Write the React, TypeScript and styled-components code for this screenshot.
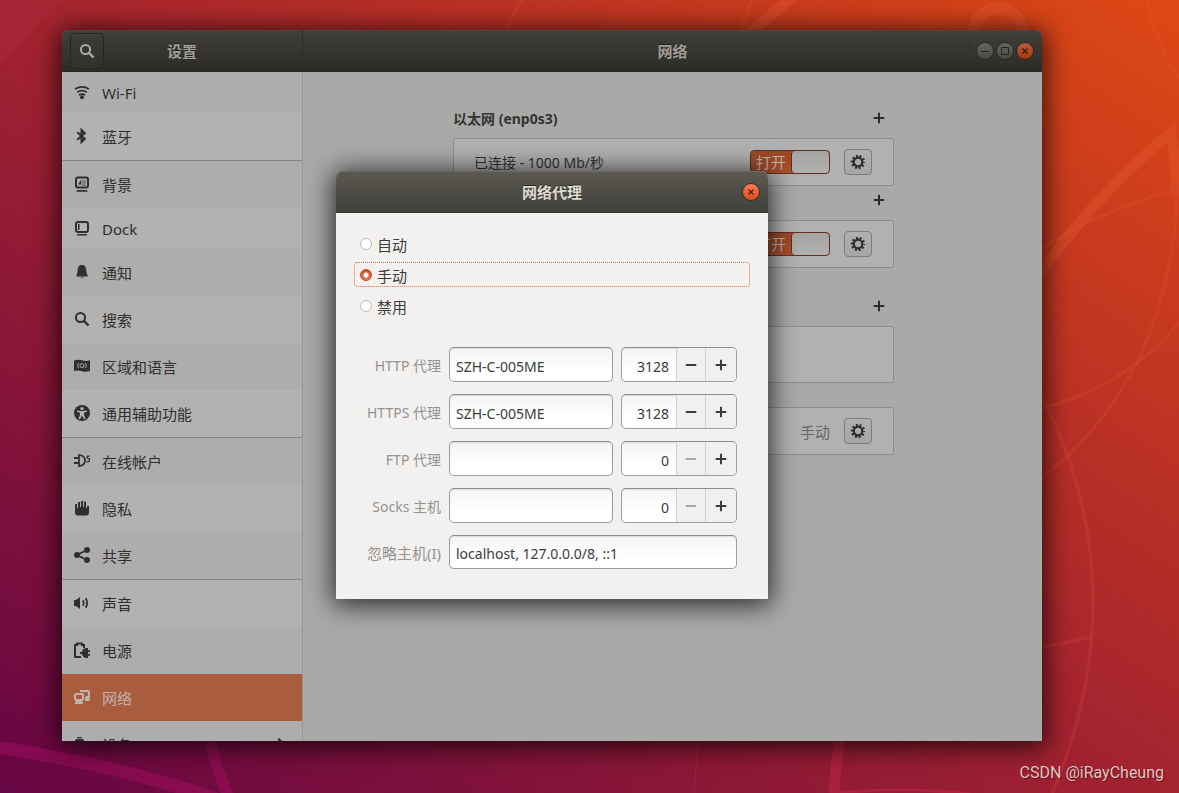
import React, { useId, useState } from "react";
import styled, { createGlobalStyle, css } from "styled-components";

const uiFont = `"Noto Sans", "Noto Sans CJK SC", sans-serif`;

const GlobalStyle = createGlobalStyle`
  *, *::before, *::after { box-sizing: border-box; }
  body { margin: 0; font-family: ${uiFont}; font-size: 14px; color: #333331; }
  button, input { font: inherit; color: inherit; margin: 0; }
  ul, h1, h2, p { margin: 0; padding: 0; }
  ul { list-style: none; }
`;

/* ---------- desktop ---------- */

const Desktop = styled.div`
  position: relative;
  display: flex;
  flex-direction: column;
  height: 100vh;
  overflow: hidden;
  background: linear-gradient(to top right, #650543 0%, #a3232f 50%, #dd4814 100%);
`;

const Wallpaper = styled.svg`
  position: absolute;
  inset: 0;
  width: 100%;
  height: 100%;
  fill: none;
`;

const Workspace = styled.div`
  position: relative;
  flex: 1;
  min-height: 0;
  display: flex;
  padding: 30px 137px 0 62px;
`;

const Credit = styled.footer`
  position: relative;
  height: 52px;
  padding: 22px 15px 0 0;
  text-align: right;
  font-family: Roboto, sans-serif;
  font-size: 16px;
  line-height: 20px;
  color: #dfc3c4;
  text-shadow: 1px 1px 1px rgba(60, 10, 10, 0.6);
`;

/* ---------- settings window ---------- */

const Window = styled.div`
  position: relative;
  flex: 1;
  min-width: 0;
  display: flex;
  flex-direction: column;
  border-radius: 7px 7px 0 0;
  background: #a9a9a7;
  box-shadow: 0 3px 26px 3px rgba(0, 0, 0, 0.75);
`;

const TitleBar = styled.header`
  display: flex;
  height: 42px;
  flex: none;
  border-radius: 7px 7px 0 0;
  background: linear-gradient(#403f39, #2c2b28);
  box-shadow: inset 0 1px #4a4943, inset 0 -1px #272623;
`;

const TitleLeft = styled.div`
  display: flex;
  align-items: center;
  width: 241px;
  padding-left: 8px;
  border-right: 1px solid #2d2c28;
`;

const Title = styled.h1`
  flex: 1;
  text-align: center;
  font-size: 15px;
  line-height: 22px;
  font-weight: 700;
  color: #a09e98;
  text-shadow: 0 -1px rgba(0, 0, 0, 0.5);
`;

const SidebarTitle = styled(Title)`
  padding-right: 42px;
`;

const TitleRight = styled.div`
  flex: 1;
  display: flex;
  align-items: center;
  padding-left: 73px;
`;

const SearchButton = styled.button`
  display: grid;
  place-items: center;
  width: 34px;
  height: 36px;
  padding: 0;
  border: 1px solid #262522;
  border-radius: 5px;
  background: linear-gradient(#3c3b36, #31302c);
  box-shadow: inset 0 1px #45443e;
  color: #aaa9a4;
`;

const WindowControls = styled.div`
  display: flex;
  gap: 2px;
  padding: 0 8px 0 6px;
  border-left: 1px solid #302f2b;
`;

const RoundButton = styled.button<{ $tone: "grey" | "dimOrange" | "orange" }>`
  display: grid;
  place-items: center;
  width: 18px;
  height: 18px;
  padding: 0;
  border-radius: 50%;
  border: 1px solid #292824;
  ${({ $tone }) =>
    $tone === "grey"
      ? css`background: linear-gradient(#666560, #494843); color: #272622;`
      : $tone === "dimOrange"
      ? css`background: linear-gradient(#bb5a3f, #a03910); color: #36180c;`
      : css`background: linear-gradient(#f67d58, #df4816); color: #4b2011; border-color: #33312c;`}
`;

const WindowBody = styled.div`
  flex: 1;
  min-height: 0;
  display: flex;
`;

const Sidebar = styled.nav`
  width: 241px;
  flex: none;
  overflow: hidden;
  border-right: 1px solid #989896;
  background: #adadad;
`;

const SidebarItem = styled.li<{ $divided?: boolean }>`
  border-bottom: ${({ $divided }) => ($divided ? "1px solid #8a8783" : "0")};
`;

const SidebarLink = styled.a<{ $selected?: boolean; $short?: boolean; $light?: boolean }>`
  display: flex;
  align-items: center;
  gap: 12px;
  height: ${({ $short }) => ($short ? 41 : 47)}px;
  padding: 0 17px 2px 12px;
  font-size: 15px;
  text-decoration: none;
  color: ${({ $selected }) => ($selected ? "#c1b2ab" : "#2f2f2e")};
  background: ${({ $selected, $light }) => ($selected ? "#a95c3e" : $light ? "#b2b2b2" : "#adadad")};

  svg { flex: none; }
  span { flex: 1; padding-top: 2px; }
`;

const Panel = styled.main`
  flex: 1;
  padding: 32px 24px 32px 26px;
`;

const Column = styled.div`
  max-width: 441px;
  margin: 0 auto;
`;

const Section = styled.section<{ $spaced?: boolean }>`
  margin-top: ${({ $spaced }) => ($spaced ? 24 : 0)}px;
`;

const SectionHead = styled.div`
  display: flex;
  align-items: center;
  justify-content: space-between;
  height: 28px;
  margin-bottom: 6px;
`;

const SectionTitle = styled.h2`
  padding-top: 2px;
  font-size: 14px;
  line-height: 20px;
  font-weight: 700;
`;

const AddButton = styled.button`
  display: grid;
  place-items: center;
  margin-left: auto;
  width: 30px;
  height: 28px;
  padding: 0;
  border: 0;
  background: none;
  color: #2c2c2b;
`;

const Card = styled.div<{ $tall?: boolean }>`
  display: flex;
  align-items: center;
  gap: 14px;
  height: ${({ $tall }) => ($tall ? 57 : 48)}px;
  padding: 0 21px 0 20px;
  border: 1px solid #8d8d8b;
  border-radius: 2px;
  background: #b1b1b1;
`;

const CardText = styled.p`
  flex: 1;
`;

const CardValue = styled.p`
  margin-left: auto;
  font-size: 15px;
  color: #676765;
`;

const Switch = styled.label`
  position: relative;
  display: flex;
  justify-content: space-between;
  align-items: center;
  width: 80px;
  height: 24px;
  margin-left: auto;
  padding-left: 5px;
  border: 1px solid #62301e;
  border-radius: 4px;
  background: linear-gradient(#9c4827, #a9502d);
  color: #c6b5ad;
  font-size: 15px;
  line-height: 22px;

  input {
    position: absolute;
    opacity: 0;
    inset: 0;
  }
`;

const SwitchKnob = styled.span`
  width: 38px;
  height: 22px;
  border-left: 1px solid #62301e;
  border-radius: 4px;
  background: linear-gradient(#a4a4a2, #b1b1af);
`;

const GearButton = styled.button`
  display: grid;
  place-items: center;
  width: 28px;
  height: 26px;
  padding: 0;
  border: 1px solid #7d7d7b;
  border-radius: 4px;
  background: linear-gradient(#b0b0af, #a6a6a4);
  color: #2c2c2b;
`;

/* ---------- proxy dialog ---------- */

const DialogLayer = styled.div`
  position: absolute;
  inset: 0;
  display: grid;
  place-items: center;
  padding-bottom: 1px;
`;

const Dialog = styled.form`
  width: 432px;
  border-radius: 7px 7px 0 0;
  background: #f2f1f0;
  color: #3c3c3b;
  box-shadow: 0 3px 26px 3px rgba(0, 0, 0, 0.75);
`;

const DialogBar = styled.header`
  display: flex;
  align-items: center;
  height: 42px;
  padding: 0 8px 0 26px;
  border-radius: 7px 7px 0 0;
  background: linear-gradient(#5c5a51, #403f3a);
  box-shadow: inset 0 1px #6a685e, inset 0 -1px #363530;
`;

const DialogTitle = styled(Title)`
  color: #dfdbd2;
`;

const DialogBody = styled.div`
  padding: 18px 18px 30px;
`;

const ModeList = styled.div`
  display: grid;
  gap: 6px;
  margin-bottom: 29px;
`;

const Mode = styled.label<{ $focused?: boolean }>`
  display: flex;
  align-items: center;
  gap: 5px;
  height: 25px;
  padding: 0 4px 0 5px;
  border: 1px dotted ${({ $focused }) => ($focused ? "#ee6b3c" : "transparent")};
  border-radius: 3px;
  font-size: 15px;
  line-height: 22px;

  span { padding-top: 2px; }
`;

const Radio = styled.input`
  appearance: none;
  width: 12px;
  height: 12px;
  border: 1px solid #bdbbb8;
  border-radius: 50%;
  background: #ffffff;

  &:checked {
    border-color: #bb4a22;
    background: radial-gradient(circle, #ffffff 0 2px, transparent 3px), linear-gradient(#cb4f22, #ea7f58);
  }
`;

const Fields = styled.div`
  display: grid;
  grid-template-columns: 87px 1fr 116px;
  gap: 12px 8px;
  padding-right: 13px;
`;

const FieldLabel = styled.label<{ $large?: boolean }>`
  align-self: center;
  padding-top: 2px;
  text-align: right;
  white-space: nowrap;
  font-size: ${({ $large }) => ($large ? 15 : 14)}px;
  line-height: 20px;
  color: #94928f;
`;

const entry = css`
  height: 35px;
  border: 1px solid #a09e9b;
  border-top-color: #8e8c89;
  border-radius: 5px;
  background: linear-gradient(#f4f4f4, #ffffff 70%);
  box-shadow: inset 0 1px 1px #dddddc;
`;

const Entry = styled.input<{ $wide?: boolean }>`
  ${entry}
  width: 100%;
  min-width: 0;
  padding: 3px 6px 0;
  outline: 0;
  ${({ $wide }) => $wide && css`grid-column: span 2; height: 34px;`}
`;

const Spin = styled.div`
  ${entry}
  display: flex;
  overflow: hidden;
`;

const SpinValue = styled.input`
  flex: 1;
  min-width: 0;
  padding: 3px 7px 0 0;
  border: 0;
  background: none;
  text-align: right;
  outline: 0;
`;

const SpinButton = styled.button<{ $last?: boolean }>`
  display: grid;
  place-items: center;
  width: ${({ $last }) => ($last ? 31 : 29)}px;
  padding: 0 1px 0 0;
  border: 0;
  border-left: 1px solid #d3d2d0;
  background: #f1f0ef;
  color: #3c3c3b;

  &:disabled { color: #a9a7a4; }
`;

/* ---------- icons ---------- */

type IconProps = { size?: number; children: React.ReactNode };

const Icon = ({ size = 16, children }: IconProps) => (
  <svg width={size} height={size} viewBox="0 0 16 16" fill="currentColor" aria-hidden="true">
    {children}
  </svg>
);

const line = (width: number) => ({ fill: "none", stroke: "currentColor", strokeWidth: width });

const WifiIcon = () => (
  <Icon>
    <path d="M1 5Q8 .6 15 5M3.200 8.200Q8 5.200 12.800 8.200M5 11Q8 9.200 11 11" {...line(1.700)} />
    <circle cx="8" cy="13.200" r="2" />
  </Icon>
);
const BluetoothIcon = () => (
  <Icon>
    <path d="M3.200 4.300l7.600 6.400-3.300 3.300V2l3.300 3.300-7.600 6.400" {...line(2.100)} />
  </Icon>
);
const BackgroundIcon = () => (
  <Icon>
    <rect x="2" y="1.500" width="12" height="10" rx="2" {...line(2)} />
    <path d="M3.500 14h9l1.500 1.800H2z" />
    <path d="M4 8.500l3-4.500v4.500z" />
    <path d="M7.500 4H12v6H7.500z" opacity=".35" />
  </Icon>
);
const DockIcon = () => (
  <Icon>
    <rect x="2" y="2" width="12" height="10" rx="2" {...line(2)} />
    <path d="M3.500 14h9l1 1.500H2.500zM4 4h1.500v6H4z" />
  </Icon>
);
const BellIcon = () => (
  <Icon>
    <path d="M8 1c3 0 4 2 4.300 5 .3 3.500.7 4.500 1.700 6.500H2c1-2 1.400-3 1.700-6.500C4 3 5 1 8 1zM6.500 13h3L8 14.200z" />
  </Icon>
);
const SearchIcon = () => (
  <Icon>
    <circle cx="6.500" cy="6.500" r="4.600" {...line(2)} />
    <path d="M10 10l4.500 4.500" {...line(2.400)} />
  </Icon>
);
const RegionIcon = () => (
  <Icon>
    <path d="M0 2.500Q4 1 8 2.300T16 2.200V13q-4 1.300-8 .2T0 13z" />
    <g stroke="#adadad" fill="none" strokeWidth="1">
      <circle cx="8" cy="7.600" r="2" />
      <path d="M4.500 5q-1.800 2.600 0 5.200M11.500 5q1.800 2.600 0 5.200" />
    </g>
  </Icon>
);
const AccessIcon = () => (
  <Icon>
    <circle cx="8" cy="8" r="8" />
    <g fill="#b2b2b2">
      <circle cx="8" cy="3.600" r="1.700" />
      <path d="M3 5.600l4 .4h2l4-.4v1.200l-3 .9v2l1.500 4.100-1.400.5L8 10.600 5.900 14.300l-1.400-.5L6 9.700v-2l-3-.9z" />
    </g>
  </Icon>
);
const AccountsIcon = () => (
  <Icon>
    <path d="M0 5h5M0 10h5" {...line(1.900)} />
    <path d="M5 2q6 .5 6 5.600T5 13.200z" {...line(1.700)} />
    <path d="M15.600 3.300q-2.600-.8-2.600.8t2 1.500-.6 3.100q-1 .3-2-.2" {...line(1.200)} />
  </Icon>
);
const HandIcon = () => (
  <Icon>
    <path d="M1 4h2v4h1V2h2v5h1V1h2v6h1V1.500h2V8h1V6h2v6.500q0 3-3 3H4q-3 0-3-3z" />
  </Icon>
);
const ShareIcon = () => (
  <Icon>
    <circle cx="3" cy="8" r="3" />
    <circle cx="13" cy="3" r="3" />
    <circle cx="13" cy="13" r="3" />
    <path d="M13 3L3 8l10 5" {...line(1.800)} />
  </Icon>
);
const SoundIcon = () => (
  <Icon>
    <path d="M0 5h2l4-3v12l-4-3H0z" />
    <path d="M9 5.300q1.500 2.700 0 5.400M11.700 3.200q2.800 4.800 0 9.600" {...line(1.800)} />
  </Icon>
);
const PowerIcon = () => (
  <Icon>
    <path d="M7 15H1V3h2V1.500h5V3h2v3" {...line(2)} />
    <path d="M6 10h2Q8.500 6.500 12 6h2v2.200h2v1.700h-2v2.200h2v1.700h-2V16h-2q-3.500-.5-4-4H6z" />
  </Icon>
);
const NetworkIcon = () => (
  <Icon>
    <rect x="1" y="5" width="8" height="6" rx="1" {...line(2)} />
    <path d="M2 12h6l1.500 3H.5z" />
    <path d="M6 2h8q1 0 1 1v5h-3" {...line(2)} />
    <path d="M11 8h4l1 4h-5z" />
  </Icon>
);
const DevicesIcon = () => (
  <Icon>
    <path d="M3 1h5v1.300H3zM2.500 3h6Q10 3 10 5v10H1V5q0-2 1.500-2z" />
  </Icon>
);
const ChevronIcon = () => (
  <Icon size={12}>
    <path d="M7 1l7 7-7 7" {...line(3)} />
  </Icon>
);
const GearIcon = () => (
  <Icon>
    <circle cx="8" cy="8" r="4.300" {...line(2.200)} />
    <circle cx="8" cy="8" r="6" {...line(2.400)} strokeDasharray="1.900 1.870" strokeDashoffset=".95" />
  </Icon>
);
const PlusIcon = () => (
  <Icon size={12}>
    <path d="M8 1v14M1 8h14" {...line(2.700)} />
  </Icon>
);
const MinusIcon = () => (
  <Icon size={12}>
    <path d="M1 8h14" {...line(2.700)} />
  </Icon>
);
const CloseGlyph = () => (
  <Icon size={8}>
    <path d="M3 3l10 10M13 3L3 13" {...line(2.400)} />
  </Icon>
);
const MinimizeGlyph = () => (
  <Icon size={8}>
    <path d="M0 9h16" {...line(2)} />
  </Icon>
);
const MaximizeGlyph = () => (
  <Icon size={8}>
    <path d="M1 1h14v14H1z" {...line(2)} />
  </Icon>
);

/* ---------- content ---------- */

type NavEntry = {
  label: string;
  icon: React.FC;
  short?: boolean;
  divided?: boolean;
  light?: boolean;
  more?: boolean;
};

const navEntries: NavEntry[] = [
  { label: "Wi-Fi", icon: WifiIcon, short: true },
  { label: "蓝牙", icon: BluetoothIcon, divided: true, light: true },
  { label: "背景", icon: BackgroundIcon },
  { label: "Dock", icon: DockIcon, short: true, light: true },
  { label: "通知", icon: BellIcon },
  { label: "搜索", icon: SearchIcon, light: true },
  { label: "区域和语言", icon: RegionIcon },
  { label: "通用辅助功能", icon: AccessIcon, divided: true, light: true },
  { label: "在线帐户", icon: AccountsIcon },
  { label: "隐私", icon: HandIcon, light: true },
  { label: "共享", icon: ShareIcon, divided: true },
  { label: "声音", icon: SoundIcon, light: true },
  { label: "电源", icon: PowerIcon },
  { label: "网络", icon: NetworkIcon },
  { label: "设备", icon: DevicesIcon, more: true },
];

const ToggleSwitch = ({ name }: { name: string }) => (
  <Switch>
    <input type="checkbox" role="switch" aria-label={name} defaultChecked />
    打开
    <SwitchKnob />
  </Switch>
);

const Gear = ({ name }: { name: string }) => (
  <GearButton type="button" aria-label={name}>
    <GearIcon />
  </GearButton>
);

const AddRow = ({ title }: { title?: string }) => (
  <SectionHead>
    {title && <SectionTitle>{title}</SectionTitle>}
    <AddButton type="button" aria-label="添加">
      <PlusIcon />
    </AddButton>
  </SectionHead>
);

type ProxyRowProps = { label: string; host: string; port: number };

const ProxyRow = ({ label, host, port }: ProxyRowProps) => {
  const id = useId();
  const [value, setValue] = useState(port);
  return (
    <>
      <FieldLabel htmlFor={id}>{label}</FieldLabel>
      <Entry id={id} defaultValue={host} />
      <Spin>
        <SpinValue
          aria-label={`${label} 端口`}
          inputMode="numeric"
          value={value}
          onChange={(e) => setValue(Number(e.target.value) || 0)}
        />
        <SpinButton type="button" aria-label="减少" disabled={value === 0} onClick={() => setValue(value - 1)}>
          <MinusIcon />
        </SpinButton>
        <SpinButton type="button" $last aria-label="增加" onClick={() => setValue(value + 1)}>
          <PlusIcon />
        </SpinButton>
      </Spin>
    </>
  );
};

const modes = ["自动", "手动", "禁用"];

const ProxyDialog = () => {
  const [mode, setMode] = useState("手动");
  return (
    <Dialog role="dialog" aria-labelledby="proxy-title">
      <DialogBar>
        <DialogTitle as="h2" id="proxy-title">网络代理</DialogTitle>
        <RoundButton type="button" $tone="orange" aria-label="关闭">
          <CloseGlyph />
        </RoundButton>
      </DialogBar>
      <DialogBody>
        <ModeList role="radiogroup" aria-labelledby="proxy-title">
          {modes.map((m) => (
            <Mode key={m} $focused={m === mode}>
              <Radio type="radio" name="mode" checked={m === mode} onChange={() => setMode(m)} />
              <span>{m}</span>
            </Mode>
          ))}
        </ModeList>
        <Fields>
          <ProxyRow label="HTTP 代理" host="SZH-C-005ME" port={3128} />
          <ProxyRow label="HTTPS 代理" host="SZH-C-005ME" port={3128} />
          <ProxyRow label="FTP 代理" host="" port={0} />
          <ProxyRow label="Socks 主机" host="" port={0} />
          <FieldLabel htmlFor="ignore-hosts" $large>忽略主机(I)</FieldLabel>
          <Entry id="ignore-hosts" $wide defaultValue="localhost, 127.0.0.0/8, ::1" />
        </Fields>
      </DialogBody>
    </Dialog>
  );
};

const WallpaperArt = () => (
  <Wallpaper viewBox="0 0 1179 793" preserveAspectRatio="xMidYMid slice" aria-hidden="true">
    <g stroke="#f0683a" strokeOpacity=".26">
      <circle cx="998" cy="32" r="24" strokeWidth="12" />
      <path d="M795-5Q765 20 735 45" strokeWidth="11" />
      <path d="M1036 278Q1100 190 1171 133Q1176 160 1176 195" strokeWidth="11" />
    </g>
    <g stroke="#f0683a" strokeOpacity=".15" strokeWidth="3.500">
      <path d="M523-2Q512 15 505 35M753-2Q745 15 740 35" />
      <path d="M1146-5Q1155 45 1182 82" />
      <path d="M1040 250Q1090 215 1172 190" />
      <path d="M1177 195Q1174 280 1140 357Q1100 435 1040 479" />
      <path d="M1182 319Q1130 385 1040 409" />
    </g>
    <g stroke="#e04a44" strokeOpacity=".24" strokeWidth="3.500">
      <path d="M1040 394Q1092 490 1093 600Q1093 700 1051 796" />
      <path d="M1040 648L1091 637" />
    </g>
    <g stroke="#e0305a" strokeOpacity=".3">
      <path d="M840 738Q835 770 834 796" strokeWidth="11" />
      <path d="M698 738L694 796" strokeWidth="1" />
      <path d="M840 793Q900 786 970 794" strokeWidth="3" />
    </g>
    <g stroke="#b0106a" strokeOpacity=".4">
      <path d="M-5 747Q120 765 225 802" strokeWidth="13" />
      <path d="M210 738Q216 770 230 800" strokeWidth="11" />
    </g>
    <path d="M0 0H60L0 66z" fill="#b83050" fillOpacity=".2" />
  </Wallpaper>
);

export default function App() {
  return (
    <Desktop>
      <GlobalStyle />
      <WallpaperArt />
      <Workspace>
        <Window>
          <TitleBar>
            <TitleLeft>
              <SearchButton type="button" aria-label="搜索">
                <SearchIcon />
              </SearchButton>
              <SidebarTitle as="p">设置</SidebarTitle>
            </TitleLeft>
            <TitleRight>
              <Title>网络</Title>
              <WindowControls>
                <RoundButton type="button" $tone="grey" aria-label="最小化">
                  <MinimizeGlyph />
                </RoundButton>
                <RoundButton type="button" $tone="grey" aria-label="最大化">
                  <MaximizeGlyph />
                </RoundButton>
                <RoundButton type="button" $tone="dimOrange" aria-label="关闭">
                  <CloseGlyph />
                </RoundButton>
              </WindowControls>
            </TitleRight>
          </TitleBar>
          <WindowBody>
            <Sidebar>
              <ul>
                {navEntries.map(({ label, icon: EntryIcon, short, divided, light, more }) => (
                  <SidebarItem key={label} $divided={divided}>
                    <SidebarLink href="#" $short={short} $light={light} $selected={label === "网络"}>
                      <EntryIcon />
                      <span>{label}</span>
                      {more && <ChevronIcon />}
                    </SidebarLink>
                  </SidebarItem>
                ))}
              </ul>
            </Sidebar>
            <Panel>
              <Column>
                <Section>
                  <AddRow title="以太网 (enp0s3)" />
                  <Card>
                    <CardText>已连接 - 1000 Mb/秒</CardText>
                    <ToggleSwitch name="以太网 (enp0s3)" />
                    <Gear name="以太网选项" />
                  </Card>
                </Section>
                <Section>
                  <AddRow />
                  <Card>
                    <ToggleSwitch name="以太网" />
                    <Gear name="以太网选项" />
                  </Card>
                </Section>
                <Section $spaced>
                  <AddRow />
                  <Card $tall />
                </Section>
                <Section $spaced>
                  <Card>
                    <CardValue>手动</CardValue>
                    <Gear name="网络代理选项" />
                  </Card>
                </Section>
              </Column>
            </Panel>
          </WindowBody>
          <DialogLayer>
            <ProxyDialog />
          </DialogLayer>
        </Window>
      </Workspace>
      <Credit>CSDN @iRayCheung</Credit>
    </Desktop>
  );
}
